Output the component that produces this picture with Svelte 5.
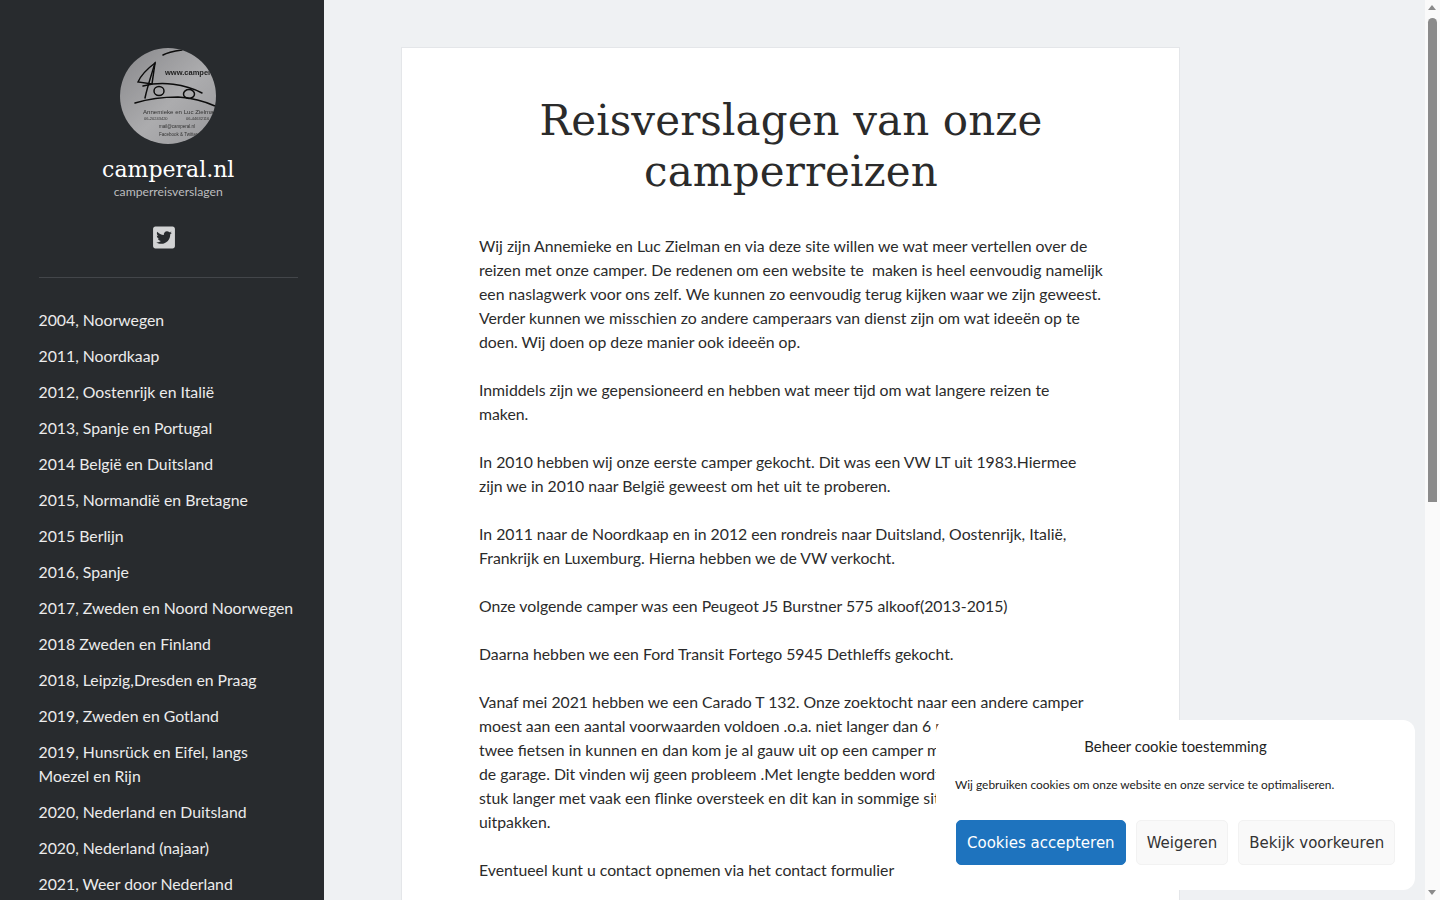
<script>
  const trips = [
    '2004, Noorwegen',
    '2011, Noordkaap',
    '2012, Oostenrijk en Italië',
    '2013, Spanje en Portugal',
    '2014 België en Duitsland',
    '2015, Normandië en Bretagne',
    '2015 Berlijn',
    '2016, Spanje',
    '2017, Zweden en Noord Noorwegen',
    '2018 Zweden en Finland',
    '2018, Leipzig,Dresden en Praag',
    '2019, Zweden en Gotland',
    '2019, Hunsrück en Eifel, langs Moezel en Rijn',
    '2020, Nederland en Duitsland',
    '2020, Nederland (najaar)',
    '2021, Weer door Nederland'
  ];
</script>

<div class="page">
  <aside class="sidebar">
    <header class="brand">
      <svg class="logo" width="96" height="96" viewBox="0 0 96 96" aria-hidden="true">
        <defs>
          <linearGradient id="disc" x1="0" y1="0" x2="1" y2="1">
            <stop offset="0" stop-color="#88888b" />
            <stop offset="0.55" stop-color="#acacae" />
            <stop offset="1" stop-color="#98989b" />
          </linearGradient>
          <clipPath id="round"><circle cx="48" cy="48" r="48" /></clipPath>
        </defs>
        <g clip-path="url(#round)">
          <rect width="96" height="96" fill="url(#disc)" />
          <g fill="none" stroke="#0c0c0c" stroke-width="1.5" stroke-linecap="round">
            <path d="M43 7 C48 4 55 3 62 2" />
            <path d="M35 15 C27 21 21 27 18 34 L32 36 L35 15 Z" />
            <path d="M35 15 C31 28 27 40 25 50" />
            <path d="M23 38 C42 33 65 36 82 45" />
            <path d="M15 55 C28 51 42 49 58 49 C72 50 84 53 95 58" />
            <ellipse cx="39" cy="43" rx="5" ry="4.500" />
            <ellipse cx="69" cy="46" rx="5.500" ry="4.500" />
          </g>
          <text class="url" x="45" y="27">www.camperal.nl</text>
          <text class="name" x="23" y="66">Annemieke en Luc Zielman</text>
          <text class="small" x="24" y="71.500">06-20243420</text>
          <text class="small" x="66" y="71.500">06-44632116</text>
          <text class="small mail" x="39" y="79.500">mail@camperal.nl</text>
          <text class="small mail" x="39" y="87.500">Facebook &amp; Twitter</text>
        </g>
      </svg>
      <h2 class="site-title">camperal.nl</h2>
      <p class="tagline">camperreisverslagen</p>
      <a class="social" href="#twitter" aria-label="Twitter">
        <svg width="22" height="25" viewBox="0 0 448 512" fill="currentColor">
          <path d="M400 32H48C21.5 32 0 53.5 0 80v352c0 26.5 21.5 48 48 48h352c26.5 0 48-21.5 48-48V80c0-26.500-21.500-48-48-48zm-48.900 158.800c.2 2.800.2 5.700.2 8.500 0 86.700-66 186.600-186.600 186.600-37.200 0-71.700-10.800-100.700-29.400 5.300.6 10.400.8 15.800.8 30.700 0 58.900-10.400 81.400-28-28.800-.6-53-19.500-61.300-45.500 10.100 1.500 19.200 1.500 29.600-1.200-30-6.100-52.500-32.500-52.500-64.400v-.8c8.700 4.900 18.900 7.900 29.600 8.300a65.447 65.447 0 0 1-29.200-54.600c0-12.200 3.200-23.400 8.900-33.100 32.300 39.800 80.800 65.800 135.200 68.600-9.300-44.500 24-80.600 64-80.600 18.900 0 35.900 7.900 47.900 20.700 14.800-2.800 29-8.300 41.600-15.800-4.900 15.200-15.100 28-28.600 36 13.100-1.400 25.800-5.100 37.600-10.200-8.900 13.100-20.100 24.700-32.900 34z" />
        </svg>
      </a>
    </header>
    <nav class="menu">
      {#each trips as trip}
        <a href="#trip">{trip}</a>
      {/each}
    </nav>
  </aside>

  <main class="main">
    <article class="card">
      <h1>Reisverslagen van onze camperreizen</h1>
      <p>Wij zijn Annemieke en Luc Zielman en via deze site willen we wat meer vertellen over de reizen met onze camper. De redenen om een website te&nbsp; maken is heel eenvoudig namelijk een naslagwerk voor ons zelf. We kunnen zo eenvoudig terug kijken waar we zijn geweest. Verder kunnen we misschien zo andere camperaars van dienst zijn om wat ideeën op te doen. Wij doen op deze manier ook ideeën op.</p>
      <p>Inmiddels zijn we gepensioneerd en hebben wat meer tijd om wat langere reizen te<br />maken.</p>
      <p>In 2010 hebben wij onze eerste camper gekocht. Dit was een VW LT uit 1983.Hiermee zijn we in 2010 naar België geweest om het uit te proberen.</p>
      <p>In 2011 naar de Noordkaap en in 2012 een rondreis naar Duitsland, Oostenrijk, Italië, Frankrijk en Luxemburg. Hierna hebben we de VW verkocht.</p>
      <p>Onze volgende camper was een Peugeot J5 Burstner 575 alkoof(2013-2015)</p>
      <p>Daarna hebben we een Ford Transit Fortego 5945 Dethleffs gekocht.</p>
      <p>Vanaf mei 2021 hebben we een Carado T 132. Onze zoektocht naar een andere camper moest aan een aantal voorwaarden voldoen .o.a. niet langer dan 6 meter, en er moeten twee fietsen in kunnen en dan kom je al gauw uit op een camper met een vast bed boven de garage. Dit vinden wij geen probleem .Met lengte bedden wordt de camper vaak een stuk langer met vaak een flinke oversteek en dit kan in sommige situaties lastig zijn bij het uitpakken.</p>
      <p>Eventueel kunt u contact opnemen via het contact formulier</p>
    </article>
  </main>
</div>

<div class="scrollbar" aria-hidden="true">
  <span class="arrow up"></span>
  <span class="thumb"></span>
  <span class="arrow down"></span>
</div>

<section class="cookie">
  <div class="cookie-title">Beheer cookie toestemming</div>
  <p class="cookie-text">Wij gebruiken cookies om onze website en onze service te optimaliseren.</p>
  <div class="cookie-actions">
    <button class="accept">Cookies accepteren</button>
    <button>Weigeren</button>
    <button>Bekijk voorkeuren</button>
  </div>
</section>

<style>
  :global(body) {
    background: #eff1f3;
    color: #2b2b2b;
    font-family: Lato, "Liberation Sans", sans-serif;
    font-size: 15.8px;
    line-height: 24px;
  }

  .page {
    display: flex;
    align-items: flex-start;
  }

  .sidebar {
    position: sticky;
    top: 0;
    flex: 0 0 324px;
    box-sizing: border-box;
    height: 100vh;
    overflow: hidden;
    padding: 48px 26px 0 38.500px;
    background: #282b2e;
  }

  .brand {
    display: flex;
    flex-direction: column;
    align-items: center;
    padding-bottom: 27px;
    border-bottom: 1px solid #43464a;
  }

  .logo {
    display: block;
    filter: blur(0.4px);
  }

  .logo text {
    font-family: "Liberation Sans", sans-serif;
    fill: #222;
  }

  .logo .url {
    font-size: 7.500px;
    font-weight: 700;
  }

  .logo .name {
    font-size: 6.100px;
    fill: #333;
  }

  .logo .small {
    font-size: 4px;
    fill: #333;
  }

  .logo .mail {
    font-size: 4.500px;
  }

  .site-title {
    margin: 13px 0 0;
    font-family: "DejaVu Serif", serif;
    font-size: 22px;
    font-weight: 400;
    line-height: 26px;
    color: #fff;
  }

  .tagline {
    margin: -1px 0 0;
    font-size: 12.200px;
    line-height: 20px;
    color: #bcbdbf;
  }

  .social {
    display: block;
    height: 25px;
    margin: 23px 8px 0 0;
    color: #d2d3d4;
  }

  .social svg {
    display: block;
  }

  .menu {
    display: flex;
    flex-direction: column;
    gap: 12px;
    padding-top: 30px;
  }

  .menu a {
    color: #ececec;
    text-decoration: none;
  }

  .main {
    flex: 1;
    min-width: 0;
    padding: 47px 77px 48px;
  }

  .card {
    box-sizing: border-box;
    width: 779px;
    min-height: 1523px;
    padding: 47px 76px 48px 77px;
    background: #fff;
    border: 1px solid #e4e6e9;
  }

  h1 {
    margin: 0 0 37px;
    font-family: "DejaVu Serif", serif;
    font-size: 42px;
    font-weight: 400;
    letter-spacing: 0.100px;
    line-height: 51px;
    text-align: center;
    color: #2b2b2b;
  }

  .card p {
    margin: 0 0 24px;
  }

  .scrollbar {
    position: fixed;
    top: 0;
    right: 0;
    bottom: 0;
    width: 15px;
    background: #fafafa;
  }

  .thumb {
    position: absolute;
    top: 18px;
    left: 3px;
    width: 9px;
    height: 484px;
    background: #8b8b8b;
    border-radius: 5px 5px 0 0;
  }

  .arrow {
    position: absolute;
    left: 3px;
    width: 0;
    height: 0;
    border-left: 4.500px solid transparent;
    border-right: 4.500px solid transparent;
  }

  .arrow.up {
    top: 5px;
    border-bottom: 5px solid #8b8b8b;
  }

  .arrow.down {
    bottom: 5px;
    border-top: 5px solid #8b8b8b;
  }

  .cookie {
    position: fixed;
    right: 25px;
    bottom: 10px;
    box-sizing: border-box;
    width: 479px;
    height: 170px;
    padding: 16px 20px 0;
    background: #fff;
    border-radius: 12px;
  }

  .cookie-title {
    font-size: 14.900px;
    line-height: 20px;
    text-align: center;
    color: #222;
  }

  .cookie-text {
    margin: 19px 0 0 -1px;
    font-size: 11.900px;
    line-height: 20px;
    color: #222;
  }

  .cookie-actions {
    display: flex;
    gap: 10px;
    margin-top: 25px;
  }

  .cookie-actions button {
    height: 45px;
    padding: 0 10px;
    font-family: "DejaVu Sans", sans-serif;
    font-size: 15px;
    white-space: nowrap;
    color: #333;
    background: #f9f9f9;
    border: 1px solid #f2f2f2;
    border-radius: 5px;
  }

  .cookie-actions .accept {
    color: #fff;
    background: #1e73be;
    border-color: #1e73be;
  }
</style>
